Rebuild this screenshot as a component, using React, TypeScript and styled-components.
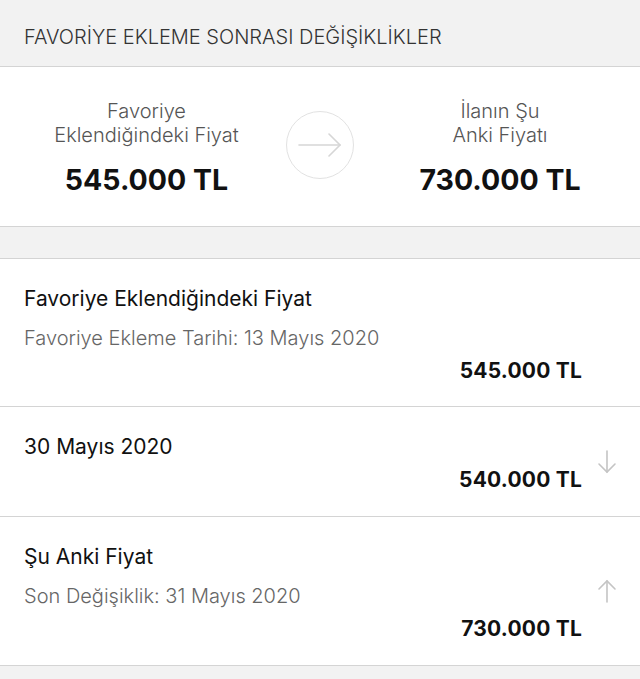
import React from "react";
import styled, { createGlobalStyle } from "styled-components";

const GlobalStyle = createGlobalStyle`
  html, body {
    margin: 0;
    padding: 0;
    background: #f2f2f2;
    font-family: Inter, Roboto, "Liberation Sans", sans-serif;
  }
`;

const Page = styled.div`
  width: 640px;
  min-height: 679px;
  background: #f2f2f2;
`;

const Header = styled.div`
  height: 67px;
  display: flex;
  align-items: center;
  padding: 8px 24px 0;
  border-bottom: 1px solid #d4d4d4;
  color: #333;
  font-size: 20px;
  font-weight: 300;
  box-sizing: border-box;
`;

const Summary = styled.div`
  height: 159px;
  background: #fff;
  border-bottom: 1px solid #d4d4d4;
  display: grid;
  grid-template-columns: 267px 80px 1fr;
  align-items: center;
  padding: 0 0 0 13px;
`;

const SummaryCol = styled.div`
  display: flex;
  flex-direction: column;
  align-items: center;
  text-align: center;
  padding-top: 2px;
`;

const SummaryLabel = styled.div`
  color: #555;
  font-size: 20px;
  font-weight: 300;
  line-height: 24px;
`;

const SummaryPrice = styled.div`
  margin-top: 15px;
  color: #111;
  font-size: 28.5px;
  font-weight: 700;
`;

const Circle = styled.div`
  width: 68px;
  height: 68px;
  border-radius: 50%;
  border: 1px solid #e2e2e2;
  box-sizing: border-box;
  display: flex;
  align-items: center;
  justify-content: center;
  justify-self: center;
  margin-top: -3px;
`;

const Spacer = styled.div`
  height: 31px;
  border-bottom: 1px solid #d4d4d4;
`;

const Row = styled.div<{ $height: number }>`
  height: ${(p) => p.$height}px;
  background: #fff;
  border-bottom: 1px solid #d4d4d4;
  display: grid;
  grid-template-columns: 1fr 50px;
  padding: 0 8px 0 24px;
  box-sizing: border-box;
`;

const RowMain = styled.div`
  display: flex;
  flex-direction: column;
  padding-top: 28px;
`;

const RowTitle = styled.div`
  color: #111;
  font-size: 21px;
  line-height: 24px;
`;

const RowSub = styled.div`
  margin-top: 15px;
  color: #666;
  font-size: 20px;
  font-weight: 300;
  line-height: 24px;
`;

const RowPrice = styled.div<{ $gap: number }>`
  margin-top: ${(p) => p.$gap}px;
  align-self: flex-end;
  color: #111;
  font-size: 21px;
  font-weight: 700;
  letter-spacing: 0.2px;
  line-height: 24px;
`;

const ArrowCell = styled.div<{ $top: number }>`
  display: flex;
  justify-content: center;
  padding-top: ${(p) => p.$top}px;
`;

const Arrow = ({ dir }: { dir: "up" | "down" }) => (
  <svg width="20" height="24" viewBox="0 0 20 24" fill="none" stroke="#c4c4c4" strokeWidth="1.6" strokeLinecap="round">
    {dir === "down" ? (
      <>
        <line x1="10" y1="1" x2="10" y2="22" />
        <polyline points="2,14 10,22 18,14" />
      </>
    ) : (
      <>
        <line x1="10" y1="2" x2="10" y2="23" />
        <polyline points="2,10 10,2 18,10" />
      </>
    )}
  </svg>
);

export default function App() {
  return (
    <>
      <GlobalStyle />
      <Page>
        <Header>FAVORİYE EKLEME SONRASI DEĞİŞİKLİKLER</Header>
        <Summary>
          <SummaryCol>
            <SummaryLabel>Favoriye</SummaryLabel>
            <SummaryLabel>Eklendiğindeki Fiyat</SummaryLabel>
            <SummaryPrice>545.000 TL</SummaryPrice>
          </SummaryCol>
          <Circle>
            <svg width="46" height="24" viewBox="0 0 46 24" fill="none" stroke="#d6d6d6" strokeWidth="1.6" strokeLinecap="round">
              <line x1="2" y1="12" x2="43" y2="12" />
              <polyline points="32,1 43,12 32,23" />
            </svg>
          </Circle>
          <SummaryCol>
            <SummaryLabel>İlanın Şu</SummaryLabel>
            <SummaryLabel>Anki Fiyatı</SummaryLabel>
            <SummaryPrice>730.000 TL</SummaryPrice>
          </SummaryCol>
        </Summary>
        <Spacer />
        <Row $height={148}>
          <RowMain>
            <RowTitle>Favoriye Eklendiğindeki Fiyat</RowTitle>
            <RowSub>Favoriye Ekleme Tarihi: 13 Mayıs 2020</RowSub>
            <RowPrice $gap={9}>545.000 TL</RowPrice>
          </RowMain>
          <ArrowCell $top={0} />
        </Row>
        <Row $height={110}>
          <RowMain>
            <RowTitle>30 Mayıs 2020</RowTitle>
            <RowPrice $gap={9}>540.000 TL</RowPrice>
          </RowMain>
          <ArrowCell $top={43}>
            <Arrow dir="down" />
          </ArrowCell>
        </Row>
        <Row $height={149}>
          <RowMain>
            <RowTitle>Şu Anki Fiyat</RowTitle>
            <RowSub>Son Değişiklik: 31 Mayıs 2020</RowSub>
            <RowPrice $gap={9}>730.000 TL</RowPrice>
          </RowMain>
          <ArrowCell $top={62}>
            <Arrow dir="up" />
          </ArrowCell>
        </Row>
      </Page>
    </>
  );
}
